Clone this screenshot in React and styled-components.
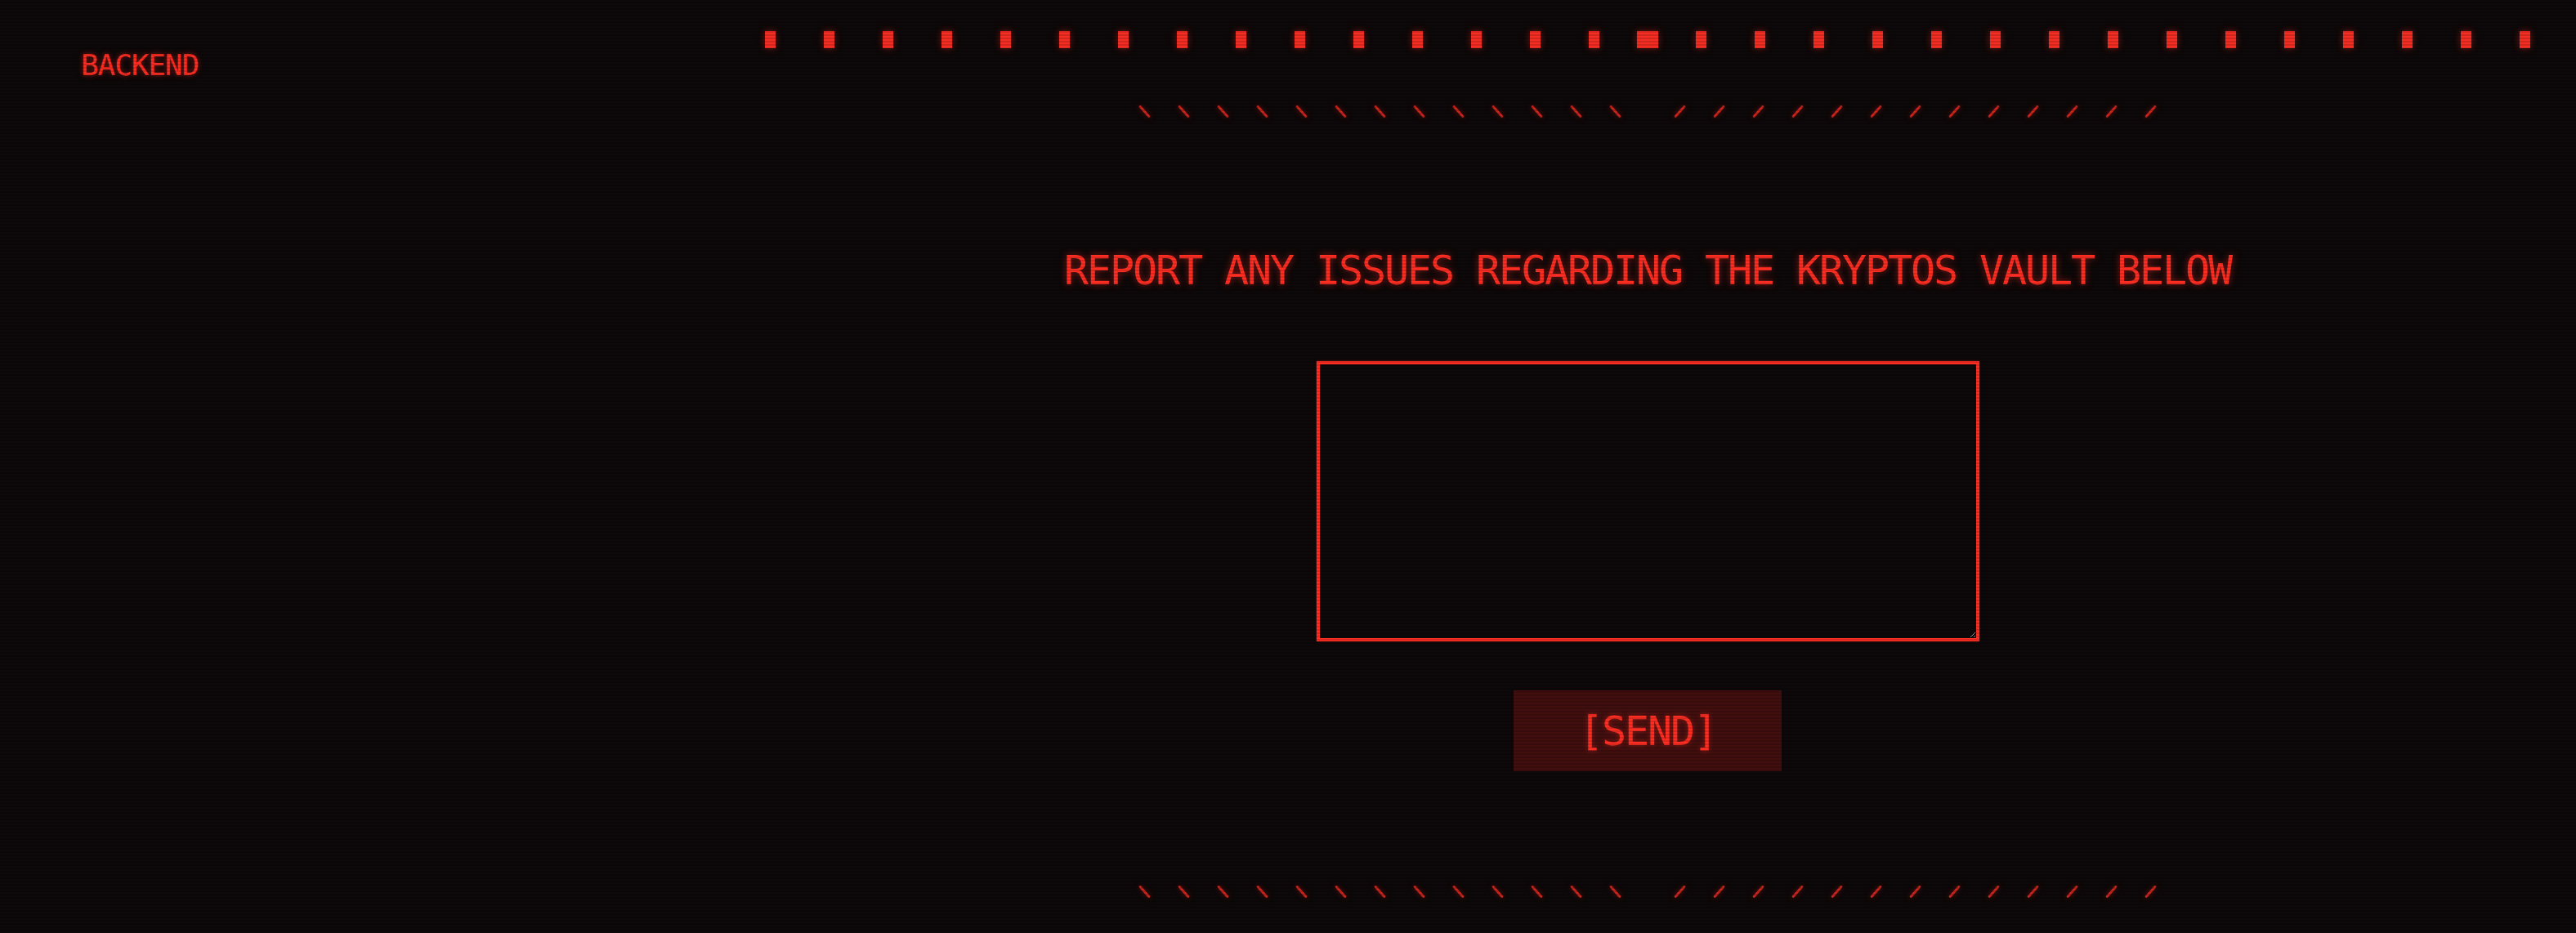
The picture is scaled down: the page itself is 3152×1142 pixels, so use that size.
import React from 'react';
import styled, { createGlobalStyle } from 'styled-components';

const RED = '#ff2e22';

const Global = createGlobalStyle`
  html, body {
    margin: 0;
    padding: 0;
    background: #0d0809;
  }
  body {
    font-family: "DejaVu Sans Mono", "Liberation Mono", monospace;
  }
  * { box-sizing: border-box; }
`;

const Page = styled.div`
  position: relative;
  display: flex;
  width: 3152px;
  min-height: 1142px;
  background: #0d0809;
`;

const Scanlines = styled.div`
  position: fixed;
  inset: 0;
  pointer-events: none;
  z-index: 10;
  background: repeating-linear-gradient(
    to bottom,
    rgba(0, 0, 0, 0) 0px,
    rgba(0, 0, 0, 0) 2px,
    rgba(0, 0, 0, 0.14) 2px,
    rgba(0, 0, 0, 0.14) 4px
  );
`;

const Sidebar = styled.aside`
  flex: 0 0 936px;
  padding: 62px 0 0 99px;
`;

const Brand = styled.div`
  font-size: 36px;
  line-height: 1;
  letter-spacing: -1.1px;
  color: ${RED};
  text-shadow: 0 0 6px rgba(255, 46, 34, 0.55);
`;

const Main = styled.main`
  flex: 1;
  margin-right: 56px;
  display: flex;
  flex-direction: column;
  align-items: center;
`;

const Strip = styled.div`
  margin-top: 38px;
  width: 100%;
  display: flex;
  height: 21px;
`;

const StripHalf = styled.div`
  flex: 0 0 1093px;
  display: flex;
  justify-content: space-between;
  margin-left: ${(p) => (p.$right ? '-26px' : '0')};
`;

const Square = styled.span`
  width: 13px;
  height: 21px;
  background: #f52e24;
  box-shadow: 0 0 8px rgba(245, 46, 36, 0.45);
`;

const TickRow = styled.div`
  margin-top: ${(p) => p.$top}px;
  display: flex;
  gap: 76px;
`;

const TickGroup = styled.div`
  display: flex;
  gap: 45px;
`;

const Tick = styled.span`
  width: 3px;
  height: 19px;
  border-radius: 2px;
  background: #c8251d;
  transform: rotate(${(p) => p.$deg}deg);
  box-shadow: 0 0 6px rgba(200, 34, 26, 0.5);
`;

const Headline = styled.h1`
  margin: 160px 0 0;
  font-size: 50px;
  font-weight: normal;
  line-height: 1;
  letter-spacing: -2.1px;
  color: ${RED};
  text-shadow: 0 0 8px rgba(255, 46, 34, 0.55);
  white-space: nowrap;
`;

const Report = styled.textarea`
  display: block;
  margin-top: 86px;
  width: 811px;
  height: 343px;
  background: transparent;
  border: 4px solid ${RED};
  box-shadow: 0 0 2px rgba(255, 46, 34, 0.55);
  border-radius: 0;
  outline: none;
  color: ${RED};
  font-family: "DejaVu Sans Mono", monospace;
  font-size: 24px;
  padding: 12px;
  color-scheme: dark;
`;

const SendButton = styled.button`
  margin-top: 60px;
  width: 328px;
  height: 99px;
  border: none;
  background: #420f0f;
  color: ${RED};
  font-family: "DejaVu Sans Mono", monospace;
  font-size: 50px;
  letter-spacing: -2.1px;
  text-shadow: 0 0 6px rgba(255, 46, 34, 0.45);
  cursor: pointer;
`;

const range = (n) => Array.from({ length: n }, (_, i) => i);

function Ticks({ top }) {
  return (
    <TickRow $top={top}>
      <TickGroup>
        {range(13).map((i) => (
          <Tick key={i} $deg={-42} />
        ))}
      </TickGroup>
      <TickGroup>
        {range(13).map((i) => (
          <Tick key={i} $deg={42} />
        ))}
      </TickGroup>
    </TickRow>
  );
}

export default function App() {
  return (
    <>
      <Global />
      <Page>
        <Sidebar>
          <Brand>BACKEND</Brand>
        </Sidebar>
        <Main>
          <Strip>
            <StripHalf>
              {range(16).map((i) => (
                <Square key={i} />
              ))}
            </StripHalf>
            <StripHalf $right>
              {range(16).map((i) => (
                <Square key={i} />
              ))}
            </StripHalf>
          </Strip>
          <Ticks top={68} />
          <Headline>REPORT ANY ISSUES REGARDING THE KRYPTOS VAULT BELOW</Headline>
          <Report aria-label="Issue report" />
          <SendButton type="button">[SEND]</SendButton>
          <Ticks top={138} />
        </Main>
        <Scanlines />
      </Page>
    </>
  );
}
